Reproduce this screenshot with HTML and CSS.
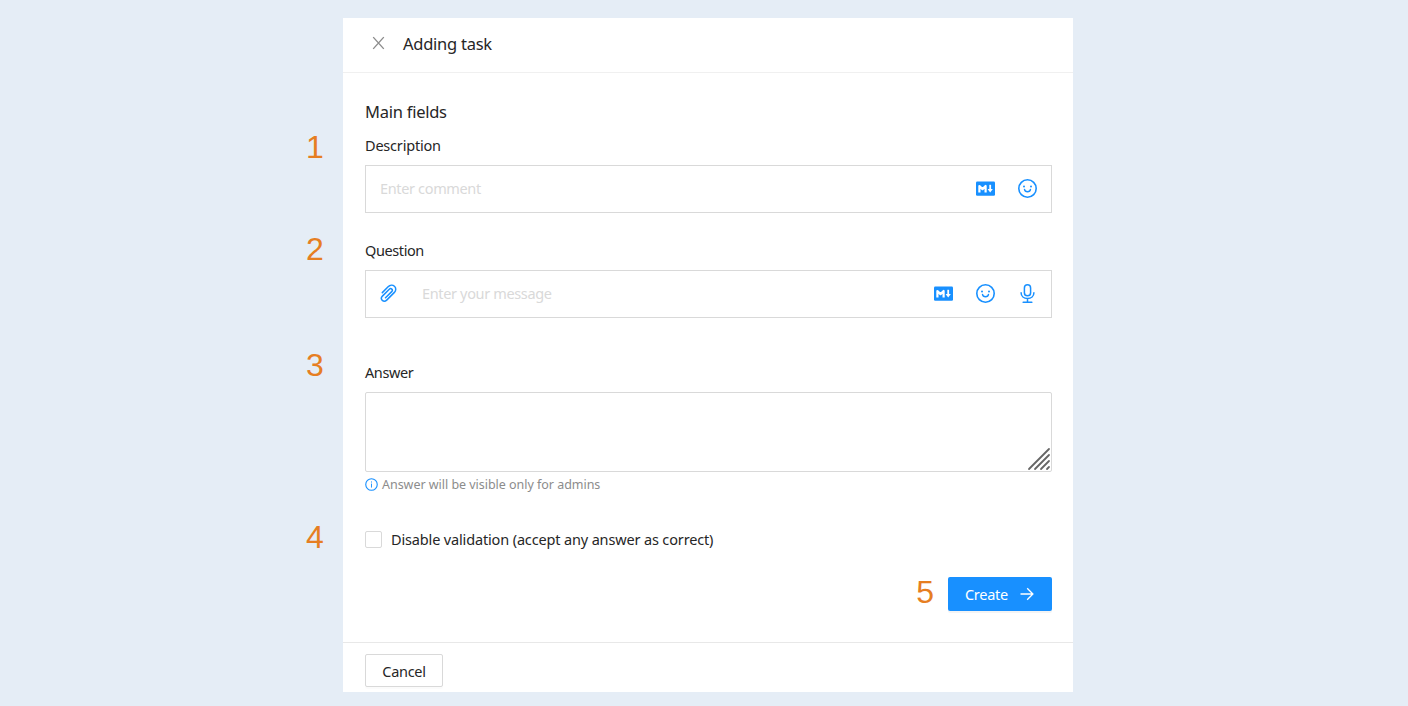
FILE: index.html
```html
<!DOCTYPE html>
<html lang="en">
<head>
    <meta charset="UTF-8">
    <meta name="viewport" content="width=device-width, initial-scale=1.0">
    <title>Adding task</title>
    <link rel="stylesheet" href="styles.css">
</head>
<body>
    <svg class="symbols" aria-hidden="true">
        <symbol id="markdown" viewBox="0 0 20 15">
            <rect x="0" y="0.5" width="19" height="14.2" rx="1.2" fill="currentColor"/>
            <path d="M3.4 11.4V5L6.5 8.1L9.6 5V11.4" fill="none" stroke="#fff" stroke-width="2.2" stroke-linejoin="round"/>
            <path d="M14.2 3.8V9" stroke="#fff" stroke-width="1.8"/>
            <path d="M11.6 8H16.8L14.2 11.5Z" fill="#fff"/>
        </symbol>
        <symbol id="smile" viewBox="0 0 20 20">
            <circle cx="9.5" cy="10.5" r="8.7" fill="none" stroke="currentColor" stroke-width="1.6"/>
            <circle cx="6" cy="8.5" r="1" fill="currentColor"/>
            <circle cx="13" cy="8.5" r="1" fill="currentColor"/>
            <path d="M6.5 11.4C6.7 12.8 7.9 13.8 9.5 13.8S12.3 12.8 12.5 11.4" fill="none" stroke="currentColor" stroke-width="1.4" stroke-linecap="round"/>
        </symbol>
        <symbol id="mic" viewBox="0 0 20 20">
            <rect x="6.4" y="1.8" width="6.2" height="11" rx="3.1" fill="none" stroke="currentColor" stroke-width="1.5"/>
            <path d="M3.1 9.8C3.1 13.4 5.9 15.6 9.5 15.6S15.9 13.4 15.9 9.8M9.5 15.6V19.3M5.2 19.3H13.8" fill="none" stroke="currentColor" stroke-width="1.5" stroke-linecap="round"/>
        </symbol>
        <symbol id="clip" viewBox="0 0 20 20">
            <path d="M2.3 9.6L8.1 3.8C10 1.9 12.7 1.7 14.4 3.2C16.3 4.9 16.1 7.6 14.4 9.4L6.7 17.1C5.4 18.4 3.5 18.5 2.3 17.4C1.1 16.2 1.2 14.3 2.4 13.1L9.3 6.2C10 5.5 11.1 5.5 11.8 6.1C12.5 6.8 12.4 7.9 11.7 8.6L5.5 14.8" fill="none" stroke="currentColor" stroke-width="1.5" stroke-linecap="round"/>
        </symbol>
    </svg>

    <div class="panel">
        <div class="header">
            <svg class="close" viewBox="0 0 14 14"><path d="M1.3 0.7L12.7 13.3M12.7 0.7L1.3 13.3"/></svg>
            <h1>Adding task</h1>
        </div>

        <div class="content">
            <h2>Main fields</h2>

            <div class="field">
                <span class="number number-1">1</span>
                <div class="label">Description</div>
                <div class="editor">
                    <span class="placeholder">Enter comment</span>
                    <svg class="icon-md"><use href="#markdown"/></svg>
                    <svg class="icon"><use href="#smile"/></svg>
                </div>
            </div>

            <div class="field field-question">
                <span class="number number-2">2</span>
                <div class="label label-tight">Question</div>
                <div class="editor">
                    <svg class="icon"><use href="#clip"/></svg>
                    <span class="placeholder">Enter your message</span>
                    <svg class="icon-md"><use href="#markdown"/></svg>
                    <svg class="icon"><use href="#smile"/></svg>
                    <svg class="icon"><use href="#mic"/></svg>
                </div>
            </div>

            <div class="field field-answer">
                <span class="number number-3">3</span>
                <div class="label label-tight">Answer</div>
                <div class="textarea">
                    <svg class="grip" viewBox="0 0 24 24"><path d="M2 22L22 2M8 22L22 8M14 22L22 14M20 22L22 20"/></svg>
                </div>
                <div class="hint">
                    <svg class="info" viewBox="0 0 14 14">
                        <circle cx="7" cy="7" r="6.2" fill="none" stroke="currentColor" stroke-width="1.2"/>
                        <path d="M7 6V10.3M7 3.7V4.9" stroke="currentColor"/>
                    </svg>
                    <span>Answer will be visible only for admins</span>
                </div>
            </div>

            <div class="field check-row">
                <span class="number number-4">4</span>
                <span class="checkbox"></span>
                <span class="check-label">Disable validation (accept any answer as correct)</span>
            </div>

            <div class="actions">
                <span class="number-5">5</span>
                <button class="btn btn-create">
                    <span>Create</span>
                    <svg class="arrow" viewBox="0 0 14 14"><path d="M0.5 7H12.7M7.2 1.3L12.9 7L7.2 12.7"/></svg>
                </button>
            </div>
        </div>

        <div class="footer">
            <button class="btn btn-cancel"><span>Cancel</span></button>
        </div>
    </div>
</body>
</html>
```
FILE: styles.css
```css
* { box-sizing: border-box; }
body { margin: 0; padding-top: 18px; height: 706px; background: #e5edf6; font-family: "Noto Sans", sans-serif; font-size: 14.5px; color: #262626; }
svg { display: block; flex: none; }
.symbols { position: absolute; width: 0; height: 0; }
.panel { width: 730px; height: 674px; margin-left: 343px; background: white; display: flex; flex-direction: column; }

.header { height: 55px; padding: 0 29px 3px; border-bottom: 1px solid #f0f0f0; display: flex; align-items: center; gap: 18px; }
.close { width: 13px; height: 14px; margin-bottom: 1px; fill: none; stroke: #8c8c8c; stroke-width: 1.5; }
h1, h2 { margin: 0; font-size: 16.5px; font-weight: 400; line-height: 26px; letter-spacing: -0.25px; }

.content { flex: 1; padding: 26px 21px 0 22px; }
.field { position: relative; margin-top: 7px; }
.field-question { margin-top: 24px; }
.field-answer { margin-top: 41px; }
.label { line-height: 26px; margin-bottom: 7px; letter-spacing: -0.2px; }
.label-tight { letter-spacing: -0.4px; }

.number, .number-5 { font-family: "Liberation Sans", sans-serif; font-size: 32px; line-height: 32px; color: #e67e22; }
.number { position: absolute; left: -59px; }
.number-1 { top: -1px; }
.number-2 { top: -4px; }
.number-3 { top: -10px; }
.number-4 { top: -7px; }
.number-5 { margin-top: -1px; }

.editor { height: 48px; border: 1px solid #d9d9d9; padding: 0 13px 2px 14px; display: flex; align-items: center; gap: 22px; color: #1890ff; }
.placeholder { flex: 1; color: #d9d9d9; letter-spacing: -0.35px; }
.icon { width: 20px; height: 20px; }
.icon-md { width: 20px; height: 15px; }

.textarea { height: 80px; border: 1px solid #d9d9d9; border-radius: 2px; display: flex; align-items: flex-end; justify-content: flex-end; padding: 0; }
.grip { width: 24px; height: 24px; fill: none; stroke: #666; stroke-width: 1.8; stroke-linecap: round; }
.hint { height: 22px; margin-top: 1px; display: flex; align-items: center; gap: 4px; font-size: 12.5px; letter-spacing: -0.03px; color: #8c8c8c; }
.info { width: 13px; height: 13px; color: #1890ff; }

.check-row { height: 22px; margin-top: 33px; display: flex; align-items: center; gap: 9px; }
.checkbox { width: 17px; height: 17px; border: 1px solid #d9d9d9; border-radius: 2px; }
.check-label { letter-spacing: -0.15px; }

.actions { margin-top: 27px; display: flex; justify-content: flex-end; gap: 14px; }
.btn { font: inherit; border-radius: 2px; display: flex; align-items: center; letter-spacing: -0.3px; }
.btn-create { width: 104px; height: 34px; padding: 0 17px; gap: 12px; border: 0; background: #1890ff; color: white; box-shadow: 0 2px 0 rgba(0,0,0,0.045); }
.arrow { width: 14px; height: 14px; fill: none; stroke: white; stroke-width: 1.3; }

.footer { height: 50px; padding: 11px 22px 0; border-top: 1px solid #e8e8e8; }
.btn-cancel { width: 78px; height: 33px; padding: 0; justify-content: center; border: 1px solid #d9d9d9; background: white; color: #262626; box-shadow: 0 2px 0 rgba(0,0,0,0.016); }
```
